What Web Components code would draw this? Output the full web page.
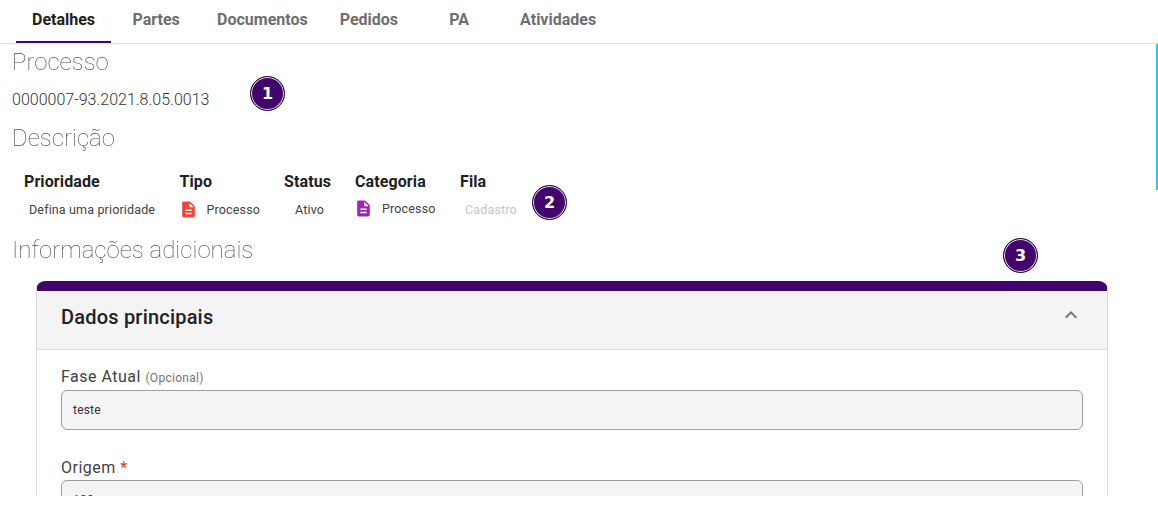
<!DOCTYPE html>
<html lang="pt">
<head>
<meta charset="utf-8">
<title>Processo</title>
<style>
  html, body { margin: 0; background: #fff; }
  body { font-family: Roboto, "Liberation Sans", sans-serif; }
</style>
</head>
<body>
<process-page>
  <tab-bar>
    <tab-item active>Detalhes</tab-item>
    <tab-item>Partes</tab-item>
    <tab-item>Documentos</tab-item>
    <tab-item style="padding-left:11px;padding-right:11px">Pedidos</tab-item>
    <tab-item style="margin-left:5px">PA</tab-item>
    <tab-item>Atividades</tab-item>
  </tab-bar>

  <section-title>Processo</section-title>
  <process-number>0000007-93.2021.8.05.0013<step-badge>1</step-badge></process-number>

  <section-title style="margin-top:8px">Descrição</section-title>
  <info-row>
    <info-cell label="Prioridade" width="155.5" inset="5">Defina uma prioridade</info-cell>
    <info-cell label="Tipo" width="104.5" inset="0"><doc-icon color="#f44336"></doc-icon>Processo</info-cell>
    <info-cell label="Status" width="71" inset="11">Ativo</info-cell>
    <info-cell label="Categoria" width="105" inset="0" raised><doc-icon color="#9c27b0"></doc-icon>Processo</info-cell>
    <info-cell label="Fila" width="72" inset="5" muted>Cadastro<step-badge style="left:72px;top:-9px">2</step-badge></info-cell>
  </info-row>

  <section-title style="margin-top:8px">Informações adicionais</section-title>

  <collapse-card heading="Dados principais">
    <step-badge slot="badge">3</step-badge>
    <form-field label="Fase Atual" hint="(Opcional)" value="teste"></form-field>
    <form-field label="Origem" required value="100"></form-field>
  </collapse-card>

  <scroll-thumb></scroll-thumb>
</process-page>

<script>
class ProcessPage extends HTMLElement {
  constructor() {
    super()
    this.attachShadow({ mode: 'open' }).innerHTML = `
      <style>
        :host { display: block; position: relative; height: 496px; overflow: hidden; color: #212121; }
      </style>
      <slot></slot>`
  }
}

class TabBar extends HTMLElement {
  constructor() {
    super()
    this.attachShadow({ mode: 'open' }).innerHTML = `
      <style>
        :host { display: flex; gap: 5px; height: 43px; padding-left: 16px; border-bottom: 1px solid #e0e0e0; }
      </style>
      <slot></slot>`
  }
}

class TabItem extends HTMLElement {
  constructor() {
    super()
    this.attachShadow({ mode: 'open' }).innerHTML = `
      <style>
        :host {
          display: flex; align-items: center; justify-content: center; box-sizing: border-box;
          min-width: 80px; height: 43px; padding: 0 16px 5px;
          font: 700 16px Roboto, sans-serif; color: #6e6e6e;
        }
        :host([active]) { color: #212121; border-bottom: 2px solid #42056b; padding-bottom: 3px; }
      </style>
      <slot></slot>`
  }
}

class SectionTitle extends HTMLElement {
  constructor() {
    super()
    this.attachShadow({ mode: 'open' }).innerHTML = `
      <style>
        :host {
          display: block; padding-left: 12px; will-change: transform;
          font: 100 24px/36px Roboto, sans-serif; color: #4a4a4a;
        }
      </style>
      <slot></slot>`
  }
}

class ProcessNumber extends HTMLElement {
  constructor() {
    super()
    this.attachShadow({ mode: 'open' }).innerHTML = `
      <style>
        :host {
          display: block; position: relative; width: 198px; margin: 8px 0 0 12px;
          font: 300 16px/24px Roboto, sans-serif; color: #333; white-space: nowrap;
        }
        ::slotted(step-badge) { left: 238px; top: -12px; }
      </style>
      <slot></slot>`
  }
}

class StepBadge extends HTMLElement {
  constructor() {
    super()
    this.attachShadow({ mode: 'open' }).innerHTML = `
      <style>
        :host {
          position: absolute; box-sizing: border-box; width: 35px; height: 35px; border-radius: 50%;
          display: flex; align-items: center; justify-content: center;
          background: #42056b; color: #fff; border: 1px solid #2b0447;
          box-shadow: inset 0 0 0 1px #e8e0ee;
          font: 700 16px "DejaVu Sans", Roboto, sans-serif; letter-spacing: 0;
        }
      </style>
      <slot></slot>`
  }
}

class InfoRow extends HTMLElement {
  constructor() {
    super()
    this.attachShadow({ mode: 'open' }).innerHTML = `
      <style>
        :host { display: flex; padding: 14px 0 0 24px; }
      </style>
      <slot></slot>`
  }
}

class InfoCell extends HTMLElement {
  constructor() {
    super()
    const inset = this.getAttribute('inset') || 0
    this.attachShadow({ mode: 'open' }).innerHTML = `
      <style>
        :host { display: block; flex: none; }
        .label { font: 700 16px/24px Roboto, sans-serif; letter-spacing: .1px; color: #212121; }
        .value {
          position: relative; display: flex; align-items: center; height: 30px;
          padding-left: ${inset}px; white-space: nowrap;
          font: 400 12.5px Roboto, sans-serif; letter-spacing: .15px; color: #424242;
        }
        :host([raised]) .value { top: -1px; }
        :host([muted]) .value { color: #c6c6c6; }
      </style>
      <div class="label">${this.getAttribute('label')}</div>
      <div class="value"><slot></slot></div>`
    this.style.width = this.getAttribute('width') + 'px'
  }
}

class DocIcon extends HTMLElement {
  constructor() {
    super()
    this.attachShadow({ mode: 'open' }).innerHTML = `
      <style>
        :host { display: inline-flex; width: 19px; height: 19px; margin-right: 9px; margin-left: -1px; flex: none; }
        svg { width: 19px; height: 19px; fill: ${this.getAttribute('color')}; }
      </style>
      <svg viewBox="0 0 24 24"><path d="M14 2H6c-1.1 0-2 .9-2 2v16c0 1.1.9 2 2 2h12c1.100 0 2-.9 2-2V8l-6-6zm2 16H8v-2h8v2zm0-4H8v-2h8v2zm-3-5V3.500L18.500 9H13z"/></svg>`
  }
}

class CollapseCard extends HTMLElement {
  constructor() {
    super()
    this.attachShadow({ mode: 'open' }).innerHTML = `
      <style>
        :host {
          display: block; position: relative; box-sizing: border-box; width: 1072px; margin: 13px 0 0 36px;
          border: 1px solid #dcdcdc; border-top: 10px solid #42056b; border-radius: 9px 9px 0 0;
        }
        header {
          display: flex; align-items: center; justify-content: space-between; box-sizing: border-box;
          height: 59px; padding: 0 24px 6px 24px; background: #f4f4f4; border-bottom: 1px solid #dcdcdc;
        }
        h2 { margin: 0; font: 500 20px Roboto, sans-serif; letter-spacing: .2px; color: #212121; }
        svg { width: 24px; height: 24px; fill: #757575; margin-top: -4px; }
        .body { padding: 15px 24px 0; display: flex; flex-direction: column; gap: 26px; }
        ::slotted(step-badge) { left: 966px; top: -53px; }
      </style>
      <slot name="badge"></slot>
      <header>
        <h2>${this.getAttribute('heading')}</h2>
        <svg viewBox="0 0 24 24"><path d="M7.410 15.410 12 10.830l4.590 4.580L18 14l-6-6-6 6z"/></svg>
      </header>
      <div class="body"><slot></slot></div>`
  }
}

class FormField extends HTMLElement {
  constructor() {
    super()
    const hint = this.getAttribute('hint')
    this.attachShadow({ mode: 'open' }).innerHTML = `
      <style>
        :host { display: block; }
        label { display: block; font: 400 16px/24px Roboto, sans-serif; letter-spacing: .5px; color: #424242; }
        small { font-size: 12px; color: #757575; letter-spacing: .3px; }
        b { font-weight: 400; color: #e53935; }
        .input {
          box-sizing: border-box; height: 40px; padding: 0 11px; border: 1px solid #9e9e9e; border-radius: 6px;
          background: #f4f4f4; display: flex; align-items: center;
          font: 400 12px Roboto, sans-serif; letter-spacing: .2px; color: #333;
        }
      </style>
      <label>${this.getAttribute('label')}${hint ? ` <small>${hint}</small>` : ''}${this.hasAttribute('required') ? ' <b>*</b>' : ''}</label>
      <div class="input">${this.getAttribute('value')}</div>`
  }
}

class ScrollThumb extends HTMLElement {
  constructor() {
    super()
    this.attachShadow({ mode: 'open' }).innerHTML = `
      <style>
        :host { position: absolute; top: 44px; right: 0; width: 2px; height: 146px; background: #18d0f5; }
      </style>`
  }
}

customElements.define('process-page', ProcessPage)
customElements.define('tab-bar', TabBar)
customElements.define('tab-item', TabItem)
customElements.define('section-title', SectionTitle)
customElements.define('process-number', ProcessNumber)
customElements.define('step-badge', StepBadge)
customElements.define('info-row', InfoRow)
customElements.define('info-cell', InfoCell)
customElements.define('doc-icon', DocIcon)
customElements.define('collapse-card', CollapseCard)
customElements.define('form-field', FormField)
customElements.define('scroll-thumb', ScrollThumb)
</script>
</body>
</html>
